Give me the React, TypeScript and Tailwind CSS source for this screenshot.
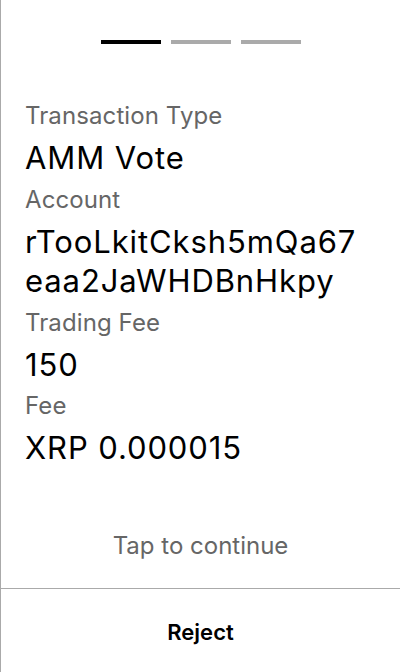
const fields = [
  { label: 'Transaction Type', value: 'AMM Vote' },
  { label: 'Account', value: 'rTooLkitCksh5mQa67eaa2JaWHDBnHkpy' },
  { label: 'Trading Fee', value: '150' },
  { label: 'Fee', value: 'XRP 0.000015' },
];

export default function App() {
  return (
    <div
      className="flex h-[672px] w-[400px] flex-col border-l border-[#aaaaaa] bg-white text-black"
      style={{ fontFamily: 'Inter, "Noto Sans", sans-serif' }}
    >
      <div className="flex justify-center gap-[10px] pt-[40px]">
        <div className="h-[4px] w-[60px] bg-black" />
        <div className="h-[4px] w-[60px] bg-[#aaaaaa]" />
        <div className="h-[4px] w-[60px] bg-[#aaaaaa]" />
      </div>

      <div className="pl-[24px] pr-[40px] pt-[50px]">
        {fields.map((f) => (
          <div key={f.label}>
            <div className="text-[24px] leading-[44px] tracking-[0.1px] text-[#666666]">{f.label}</div>
            <div className="break-all text-[31px] leading-[39.5px] tracking-[0.9px]">{f.value}</div>
          </div>
        ))}
      </div>

      <div className="mt-auto flex h-[74px] items-center justify-center pb-[10px] text-[24px] text-[#666666]">
        Tap to continue
      </div>
      <div className="flex h-[84px] items-center justify-center border-t border-[#aaaaaa] pt-[3px] text-[22px] font-semibold">
        Reject
      </div>
    </div>
  );
}
